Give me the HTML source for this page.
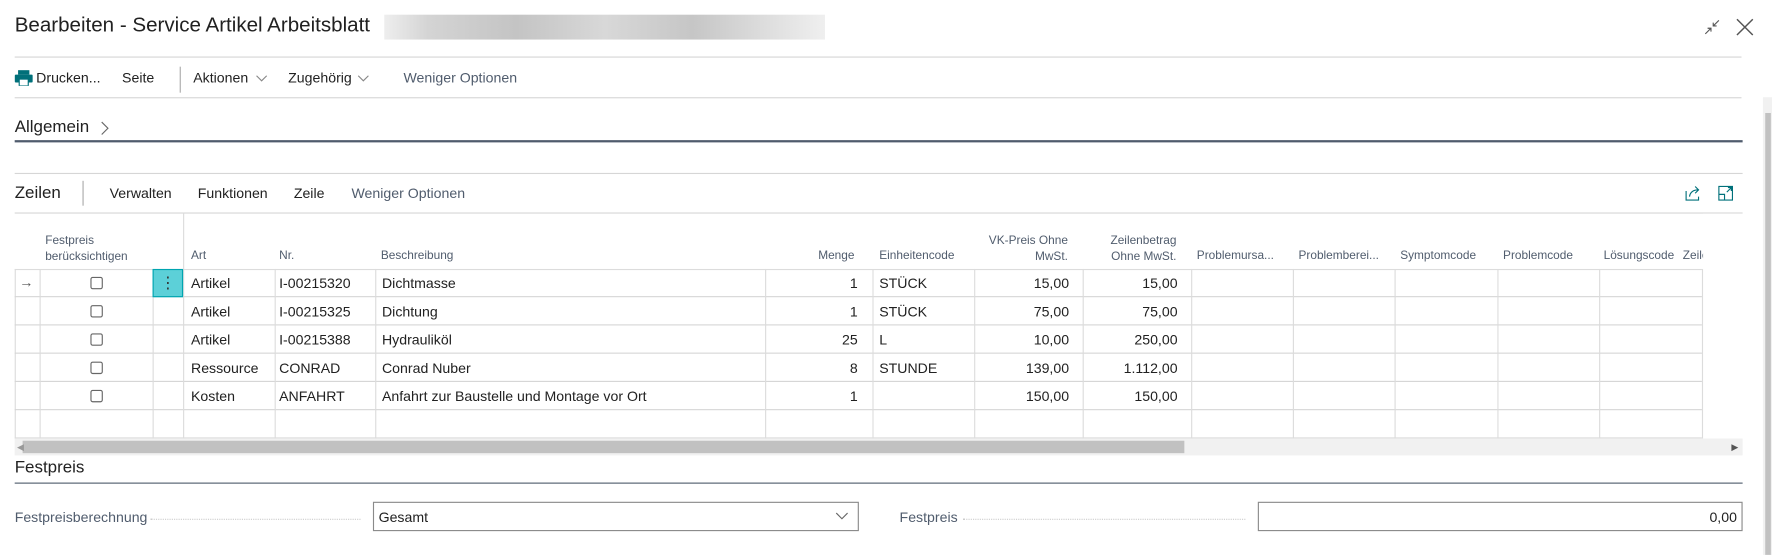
<!DOCTYPE html>
<html><head><meta charset="utf-8"><style>
*{margin:0;padding:0;box-sizing:border-box}
body{width:1772px;height:555px;background:#fff;font-family:"Liberation Sans",sans-serif;color:#212121;position:relative;overflow:hidden}
#w{position:absolute;left:0;top:0;width:1568px;height:491px;transform:scale(1.1301);transform-origin:0 0}
.a{position:absolute;white-space:nowrap}
.hl{position:absolute;height:1px;background:#d6d6d6}
.vl{position:absolute;width:1px;background:#dcdcdc}
.t{font-size:12.5px}
.h{font-size:10.5px;color:#505c6d;line-height:14px}
.cb{position:absolute;width:11px;height:11px;border:1px solid #666;border-radius:2px;background:#fff}
</style></head><body><div id="w">
<div class="a" style="left:13px;top:12px;font-size:18.2px;color:#212121">Bearbeiten - Service Artikel Arbeitsblatt</div>
<div class="a" style="left:340px;top:13px;width:390px;height:22px;background:linear-gradient(90deg,#eee,#d4d4d4 10%,#c4c4c4 30%,#d8d8d8 50%,#c6c6c6 70%,#e2e2e2 90%,#efefef)"></div>
<svg class="a" style="left:1507px;top:16px" width="16" height="16" viewBox="0 0 16 16" fill="none" stroke="#555" stroke-width="1"><path d="M2 14 L7 9 M4 9 H7 V12 M14 2 L9 7 M9 4 V7 H12"/></svg>
<svg class="a" style="left:1535px;top:15px" width="18" height="18" viewBox="0 0 18 18" stroke="#555" stroke-width="1.3"><path d="M2 2 L16 16 M16 2 L2 16"/></svg>
<div class="hl" style="left:13px;top:50px;width:1528px"></div>
<svg class="a" style="left:13px;top:62px" width="16" height="14" viewBox="0 0 16 14"><rect x="3" y="0" width="10" height="4" fill="#00707a"/><rect x="0" y="4" width="16" height="7" rx="1" fill="#00707a"/><rect x="4" y="8" width="8" height="6" fill="#fff" stroke="#00707a"/></svg>
<div class="a t" style="left:32px;top:62px">Drucken...</div>
<div class="a t" style="left:108px;top:62px">Seite</div>
<div class="vl" style="left:159px;top:59px;height:23px;background:#aaa"></div>
<div class="a t" style="left:171px;top:62px">Aktionen</div>
<svg class="a" style="left:226px;top:66px" width="11" height="7" viewBox="0 0 11 7" fill="none" stroke="#888"><path d="M1 1L5.5 5.5L10 1"/></svg>
<div class="a t" style="left:255px;top:62px">Zugehörig</div>
<svg class="a" style="left:316px;top:66px" width="11" height="7" viewBox="0 0 11 7" fill="none" stroke="#888"><path d="M1 1L5.5 5.5L10 1"/></svg>
<div class="a t" style="left:357px;top:62px;color:#505c6d">Weniger Optionen</div>
<div class="hl" style="left:13px;top:86px;width:1528px"></div>
<div class="a" style="left:13px;top:104px;font-size:15px">Allgemein</div>
<svg class="a" style="left:89px;top:107px" width="8" height="13" viewBox="0 0 8 13" fill="none" stroke="#666"><path d="M1 1L6.5 6.5L1 12"/></svg>
<div class="a" style="left:13px;top:124px;width:1529px;height:2px;background:#505c6d"></div>
<div class="hl" style="left:13px;top:153px;width:1529px"></div>
<div class="a" style="left:13px;top:162px;font-size:15px">Zeilen</div>
<div class="vl" style="left:73px;top:160px;height:22px;background:#aaa"></div>
<div class="a t" style="left:97px;top:164px">Verwalten</div>
<div class="a t" style="left:175px;top:164px">Funktionen</div>
<div class="a t" style="left:260px;top:164px">Zeile</div>
<div class="a t" style="left:311px;top:164px;color:#505c6d">Weniger Optionen</div>
<svg class="a" style="left:1491px;top:164px" width="15" height="14" viewBox="0 0 15 14" fill="none" stroke="#00707a"><path d="M1 5V13H12V10 M4 10 Q5 4 12 4 M9 1 L12 4 L9 7"/></svg>
<svg class="a" style="left:1520px;top:164px" width="14" height="14" viewBox="0 0 14 14" fill="none" stroke="#00707a"><path d="M1 1H13V13H1Z M1 8H6V13 M8 6L12 2 M9 2H12V5"/></svg>
<div class="hl" style="left:13px;top:188px;width:1529px"></div>
<div class="vl" style="left:162px;top:188px;height:50px"></div>
<div class="h a" style="left:40px;top:206px">Festpreis<br>berücksichtigen</div>
<div class="h a" style="left:169px;top:219px">Art</div>
<div class="h a" style="left:247px;top:219px">Nr.</div>
<div class="h a" style="left:337px;top:219px">Beschreibung</div>
<div class="h a" style="left:724px;top:219px">Menge</div>
<div class="h a" style="left:778px;top:219px">Einheitencode</div>
<div class="h a" style="left:842px;top:206px;width:103px;text-align:right">VK-Preis Ohne<br>MwSt.</div>
<div class="h a" style="left:938px;top:206px;width:103px;text-align:right">Zeilenbetrag<br>Ohne MwSt.</div>
<div class="h a" style="left:1059px;top:219px">Problemursa...</div>
<div class="h a" style="left:1149px;top:219px">Problemberei...</div>
<div class="h a" style="left:1239px;top:219px">Symptomcode</div>
<div class="h a" style="left:1330px;top:219px">Problemcode</div>
<div class="h a" style="left:1419px;top:219px">Lösungscode</div>
<div class="h a" style="left:1489px;top:219px">Zeilen</div>
<div class="a" style="left:1507px;top:189px;width:40px;height:198px;background:#fff"></div>
<div class="a" style="left:13px;top:238px;width:1493px;height:150px;border:1px solid #dcdcdc;border-right:none"></div>
<div class="hl" style="left:13px;top:262px;width:1493px"></div>
<div class="hl" style="left:13px;top:287px;width:1493px"></div>
<div class="hl" style="left:13px;top:312px;width:1493px"></div>
<div class="hl" style="left:13px;top:337px;width:1493px"></div>
<div class="hl" style="left:13px;top:362px;width:1493px"></div>
<div class="vl" style="left:35px;top:238px;height:150px"></div>
<div class="vl" style="left:135px;top:238px;height:150px"></div>
<div class="vl" style="left:162px;top:238px;height:150px"></div>
<div class="vl" style="left:243px;top:238px;height:150px"></div>
<div class="vl" style="left:332px;top:238px;height:150px"></div>
<div class="vl" style="left:677px;top:238px;height:150px"></div>
<div class="vl" style="left:772px;top:238px;height:150px"></div>
<div class="vl" style="left:862px;top:238px;height:150px"></div>
<div class="vl" style="left:958px;top:238px;height:150px"></div>
<div class="vl" style="left:1054px;top:238px;height:150px"></div>
<div class="vl" style="left:1144px;top:238px;height:150px"></div>
<div class="vl" style="left:1234px;top:238px;height:150px"></div>
<div class="vl" style="left:1325px;top:238px;height:150px"></div>
<div class="vl" style="left:1415px;top:238px;height:150px"></div>
<div class="vl" style="left:1506px;top:238px;height:150px"></div>
<div class="a t" style="left:17px;top:243px;color:#555">&#8594;</div>
<div class="a" style="left:135px;top:238px;width:27px;height:25px;background:#5cd0d8;border:1px solid #00a5b0;text-align:center;font-size:14px;line-height:22px;color:#333">&#8942;</div>
<div class="cb" style="left:80px;top:245px"></div>
<div class="cb" style="left:80px;top:270px"></div>
<div class="cb" style="left:80px;top:295px"></div>
<div class="cb" style="left:80px;top:320px"></div>
<div class="cb" style="left:80px;top:345px"></div>
<div class="a t" style="left:169px;top:244px">Artikel</div><div class="a t" style="left:247px;top:244px">I-00215320</div><div class="a t" style="left:338px;top:244px">Dichtmasse</div><div class="a t" style="left:677px;top:244px;width:82px;text-align:right">1</div><div class="a t" style="left:778px;top:244px">STÜCK</div><div class="a t" style="left:862px;top:244px;width:84px;text-align:right">15,00</div><div class="a t" style="left:958px;top:244px;width:84px;text-align:right">15,00</div>
<div class="a t" style="left:169px;top:269px">Artikel</div><div class="a t" style="left:247px;top:269px">I-00215325</div><div class="a t" style="left:338px;top:269px">Dichtung</div><div class="a t" style="left:677px;top:269px;width:82px;text-align:right">1</div><div class="a t" style="left:778px;top:269px">STÜCK</div><div class="a t" style="left:862px;top:269px;width:84px;text-align:right">75,00</div><div class="a t" style="left:958px;top:269px;width:84px;text-align:right">75,00</div>
<div class="a t" style="left:169px;top:294px">Artikel</div><div class="a t" style="left:247px;top:294px">I-00215388</div><div class="a t" style="left:338px;top:294px">Hydrauliköl</div><div class="a t" style="left:677px;top:294px;width:82px;text-align:right">25</div><div class="a t" style="left:778px;top:294px">L</div><div class="a t" style="left:862px;top:294px;width:84px;text-align:right">10,00</div><div class="a t" style="left:958px;top:294px;width:84px;text-align:right">250,00</div>
<div class="a t" style="left:169px;top:319px">Ressource</div><div class="a t" style="left:247px;top:319px">CONRAD</div><div class="a t" style="left:338px;top:319px">Conrad Nuber</div><div class="a t" style="left:677px;top:319px;width:82px;text-align:right">8</div><div class="a t" style="left:778px;top:319px">STUNDE</div><div class="a t" style="left:862px;top:319px;width:84px;text-align:right">139,00</div><div class="a t" style="left:958px;top:319px;width:84px;text-align:right">1.112,00</div>
<div class="a t" style="left:169px;top:344px">Kosten</div><div class="a t" style="left:247px;top:344px">ANFAHRT</div><div class="a t" style="left:338px;top:344px">Anfahrt zur Baustelle und Montage vor Ort</div><div class="a t" style="left:677px;top:344px;width:82px;text-align:right">1</div><div class="a t" style="left:862px;top:344px;width:84px;text-align:right">150,00</div><div class="a t" style="left:958px;top:344px;width:84px;text-align:right">150,00</div>
<div class="a" style="left:13px;top:388px;width:1529px;height:15px;background:#f1f1f1"></div>
<div class="a" style="left:20px;top:390px;width:1028px;height:11px;background:#c1c1c1"></div>
<div class="a" style="left:15px;top:391px;font-size:8px;color:#999">&#9664;</div>
<div class="a" style="left:1532px;top:391px;font-size:8px;color:#555">&#9654;</div>
<div class="a" style="left:1560px;top:86px;width:8px;height:405px;background:#f1f1f1"></div>
<div class="a" style="left:1562px;top:100px;width:5px;height:391px;background:#c1c1c1"></div>
<div class="a" style="left:13px;top:405px;font-size:15px">Festpreis</div>
<div class="a" style="left:13px;top:427px;width:1529px;height:1px;background:#505c6d"></div>
<div class="a t" style="left:13px;top:451px;color:#505c6d">Festpreisberechnung</div>
<div class="a" style="left:133px;top:459px;width:186px;border-top:1px dotted #ccc"></div>
<div class="a" style="left:330px;top:444px;width:430px;height:26px;border:1px solid #8a8a8a"></div>
<div class="a t" style="left:335px;top:451px">Gesamt</div>
<svg class="a" style="left:739px;top:453px" width="12" height="8" viewBox="0 0 12 8" fill="none" stroke="#666"><path d="M1 1L6 6L11 1"/></svg>
<div class="a t" style="left:796px;top:451px;color:#505c6d">Festpreis</div>
<div class="a" style="left:852px;top:459px;width:250px;border-top:1px dotted #ccc"></div>
<div class="a" style="left:1113px;top:444px;width:429px;height:26px;border:1px solid #8a8a8a"></div>
<div class="a t" style="left:1113px;top:451px;width:424px;text-align:right">0,00</div>
</div></body></html>
